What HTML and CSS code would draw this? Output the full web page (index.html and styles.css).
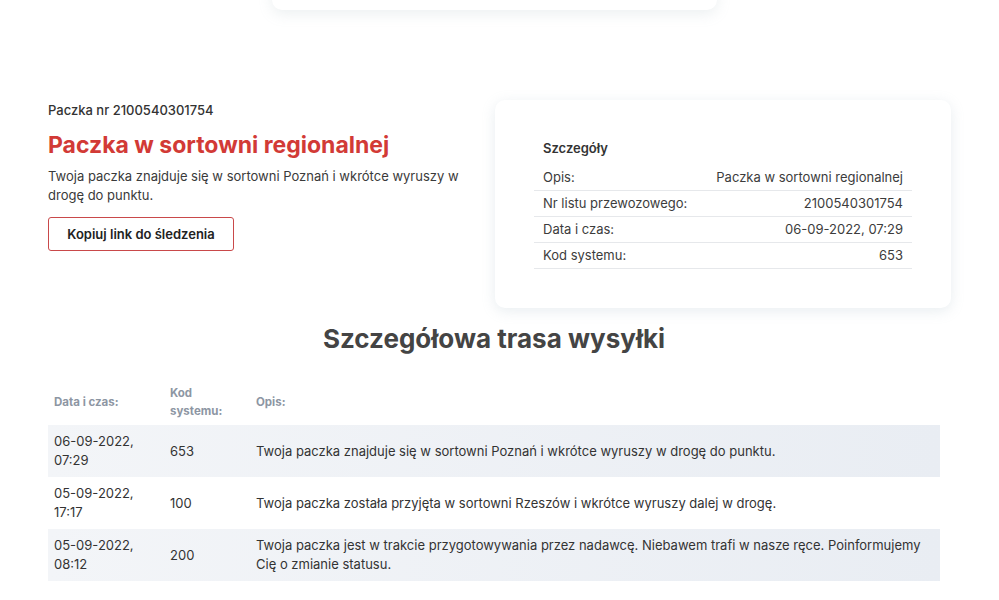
FILE: index.html
```html
<!DOCTYPE html>
<html lang="pl">
<head>
  <meta charset="UTF-8">
  <meta name="viewport" content="width=device-width, initial-scale=1.0">
  <title>Śledzenie paczki</title>
  <link rel="stylesheet" href="styles.css">
</head>
<body>
  <div class="page">
    <div class="search-card"></div>

    <div class="status">
      <div class="status-info">
        <p class="parcel-no">Paczka nr 2100540301754</p>
        <h1 class="status-title">Paczka w sortowni regionalnej</h1>
        <p class="status-text">Twoja paczka znajduje się w sortowni Poznań i wkrótce wyruszy w drogę do punktu.</p>
        <button class="copy-btn" type="button">Kopiuj link do śledzenia</button>
      </div>

      <div class="details-card">
        <h2 class="details-title">Szczegóły</h2>
        <div class="details-row"><span>Opis:</span><span>Paczka w sortowni regionalnej</span></div>
        <div class="details-row"><span>Nr listu przewozowego:</span><span>2100540301754</span></div>
        <div class="details-row"><span>Data i czas:</span><span>06-09-2022, 07:29</span></div>
        <div class="details-row"><span>Kod systemu:</span><span>653</span></div>
      </div>
    </div>

    <h2 class="route-title">Szczegółowa trasa wysyłki</h2>

    <table class="route">
      <thead>
        <tr>
          <th class="col-date">Data i czas:</th>
          <th class="col-code">Kod systemu:</th>
          <th>Opis:</th>
        </tr>
      </thead>
      <tbody>
        <tr>
          <td>06-09-2022, 07:29</td>
          <td>653</td>
          <td>Twoja paczka znajduje się w sortowni Poznań i wkrótce wyruszy w drogę do punktu.</td>
        </tr>
        <tr>
          <td>05-09-2022, 17:17</td>
          <td>100</td>
          <td>Twoja paczka została przyjęta w sortowni Rzeszów i wkrótce wyruszy dalej w drogę.</td>
        </tr>
        <tr>
          <td>05-09-2022, 08:12</td>
          <td>200</td>
          <td>Twoja paczka jest w trakcie przygotowywania przez nadawcę. Niebawem trafi w nasze ręce. Poinformujemy Cię o zmianie statusu.</td>
        </tr>
      </tbody>
    </table>
  </div>
</body>
</html>
```

FILE: styles.css
```css
body {
  font-family: Inter, "Noto Sans", Arial, sans-serif;
  background: #fff;
  color: #2b2b2b;
  margin: 0;
  padding: 0;
}

.page {
  width: 903px;
  margin: 0 0 0 48px;
}

.search-card {
  width: 445px;
  height: 60px;
  margin: -50px 0 0 224px;
  background: #fff;
  border-radius: 10px;
  box-shadow: 0 4px 14px rgba(150, 170, 180, 0.18);
}

.status {
  display: flex;
  justify-content: space-between;
  margin-top: 90px;
}

.status-info {
  width: 415px;
}

.parcel-no {
  margin: 1px 0 0;
  font-size: 13px;
  line-height: 18px;
  font-weight: 500;
  color: #333;
}

.status-title {
  margin: 12px 0 0;
  font-size: 23px;
  line-height: 28px;
  font-weight: 700;
  color: #d23a36;
}

.status-text {
  margin: 8px 0 0;
  font-size: 13px;
  line-height: 19px;
  color: #3a3a3a;
}

.copy-btn {
  margin-top: 12px;
  width: 186px;
  height: 34px;
  background: #fff;
  border: 1.5px solid #c9494a;
  border-radius: 3px;
  font-family: inherit;
  font-size: 13px;
  font-weight: 600;
  color: #222;
  cursor: pointer;
}

.details-card {
  width: 378px;
  padding: 38px 39px 39px 39px;
  background: #fff;
  border-radius: 10px;
  box-shadow: 0 3px 14px rgba(140, 165, 180, 0.2);
}

.details-title {
  margin: 0 0 7px 9px;
  font-size: 13px;
  line-height: 20px;
  font-weight: 600;
  color: #333;
}

.details-row {
  display: flex;
  justify-content: space-between;
  padding: 3px 9px 3px 9px;
  font-size: 13px;
  line-height: 19px;
  color: #3c3c3c;
  border-bottom: 1px solid #e6e8eb;
}

.route-title {
  margin: 15px 0 0;
  padding-right: 11px;
  text-align: center;
  font-size: 26px;
  line-height: 32px;
  font-weight: 700;
  color: #444;
}

.route {
  width: 892px;
  margin-top: 24px;
  border-collapse: collapse;
  table-layout: fixed;
  font-size: 13px;
  line-height: 19px;
  color: #333;
}

.route th {
  padding: 5px 6px 5px;
  text-align: left;
  font-size: 11.5px;
  line-height: 18px;
  font-weight: 700;
  color: #8d96a3;
  vertical-align: middle;
}

.route .col-date {
  width: 104px;
}

.route .col-code {
  width: 60px;
  padding-right: 20px;
}

.route td {
  padding: 7px 6px 7px;
  vertical-align: middle;
  height: 38px;
}

.route tbody tr:nth-child(odd) {
  background: linear-gradient(90deg, #f3f5f8, #e9edf3);
}
```
